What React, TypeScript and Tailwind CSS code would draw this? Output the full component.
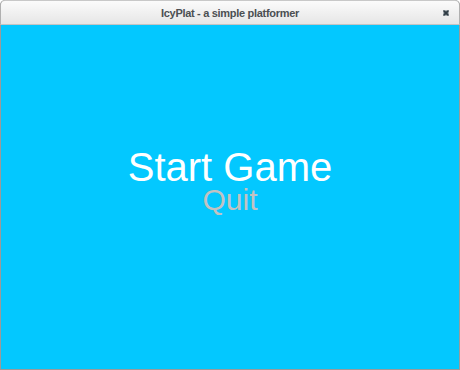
export default function App() {
  return (
    <div className="w-[460px] h-[370px] flex flex-col bg-[#9a9a9a] rounded-t-[5px] overflow-hidden p-[1px] pt-0">
      {/* title bar */}
      <div className="h-[25px] shrink-0 relative flex items-center justify-center bg-gradient-to-b from-[#fbfbfb] to-[#e6e6e6] border-b border-[#c4c4c4] rounded-t-[5px] -mx-[1px] border-x border-t border-x-[#b0b0b0] border-t-[#c8c8c8]">
        <span className="text-[11px] font-bold text-[#4b4f52] font-['Liberation_Sans',sans-serif] tracking-[-0.3px] pt-[1px]">
          IcyPlat - a simple platformer
        </span>
        <svg className="absolute right-[10px] top-[9px]" width="6" height="6" viewBox="0 0 6 6">
          <rect x="0.5" y="0.5" width="5" height="5" fill="#5f6b73" />
          <path d="M0.5 0.5 L5.5 5.5 M5.5 0.5 L0.5 5.5" stroke="#2e3a42" strokeWidth="1.4" />
        </svg>
      </div>

      {/* game canvas */}
      <div className="flex-1 bg-[#03c8ff] flex flex-col items-center justify-center pb-[30px] font-['Liberation_Sans',sans-serif]">
        <div className="text-[40px] leading-[35px] text-white">Start Game</div>
        <div className="text-[30px] leading-[30px] text-[#c2c2c2]">Quit</div>
      </div>
    </div>
  );
}
